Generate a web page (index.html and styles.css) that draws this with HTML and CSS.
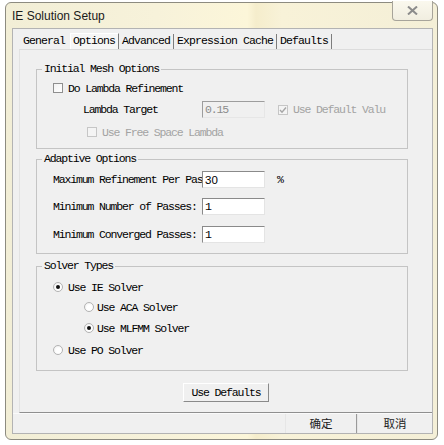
FILE: index.html
```html
<!DOCTYPE html>
<html lang="en">
<head>
    <meta charset="UTF-8">
    <title>IE Solution Setup</title>
    <link rel="stylesheet" href="styles.css">
</head>
<body>
    <div class="window">
        <div class="titlebar">
            <span class="title">IE Solution Setup</span>
            <div class="close-btn">
                <svg width="11" height="9" viewBox="0 0 11 9">
                    <path d="M1 0.5 L10 8.5 M10 0.5 L1 8.5" stroke="#8c8c8c" stroke-width="2" fill="none"/>
                </svg>
            </div>
        </div>

        <div class="client">
            <!-- Reiter -->
            <div class="tabs">
                <span class="tab plain">General</span>
                <span class="tab selected">Options</span>
                <span class="tab">Advanced</span>
                <span class="tab">Expression Cache</span>
                <span class="tab">Defaults</span>
            </div>

            <div class="page">
                <!-- Initial Mesh Options -->
                <fieldset class="group group-mesh">
                    <legend>Initial Mesh Options</legend>
                    <div class="row row-check">
                        <span class="box"></span>
                        <span>Do Lambda Refinement</span>
                    </div>
                    <div class="row row-lambda">
                        <span class="lambda-label">Lambda Target</span>
                        <input class="field disabled" type="text" value="0.15" readonly>
                        <span class="box disabled checked">
                            <svg width="8" height="8" viewBox="0 0 8 8">
                                <path d="M1 4 L3 6.2 L7 1.5" stroke="#a6a6a6" stroke-width="1.4" fill="none"/>
                            </svg>
                        </span>
                        <span class="muted">Use Default Valu</span>
                    </div>
                    <div class="row row-free">
                        <span class="box disabled"></span>
                        <span class="muted">Use Free Space Lambda</span>
                    </div>
                </fieldset>

                <!-- Adaptive Options -->
                <fieldset class="group group-adaptive">
                    <legend>Adaptive Options</legend>
                    <div class="row row-field first">
                        <span class="label">Maximum Refinement Per Pas</span>
                        <input class="field sans" type="text" value="30" readonly>
                        <span class="unit">%</span>
                    </div>
                    <div class="row row-field second">
                        <span class="label">Minimum Number of Passes:</span>
                        <input class="field" type="text" value="1" readonly>
                    </div>
                    <div class="row row-field third">
                        <span class="label">Minimum Converged Passes:</span>
                        <input class="field" type="text" value="1" readonly>
                    </div>
                </fieldset>

                <!-- Solver Types -->
                <fieldset class="group group-solver">
                    <legend>Solver Types</legend>
                    <div class="row radio-row r1">
                        <span class="radio on"></span>
                        <span>Use IE Solver</span>
                    </div>
                    <div class="row radio-row r2 sub">
                        <span class="radio"></span>
                        <span>Use ACA Solver</span>
                    </div>
                    <div class="row radio-row r3 sub">
                        <span class="radio on"></span>
                        <span>Use MLFMM Solver</span>
                    </div>
                    <div class="row radio-row r4">
                        <span class="radio"></span>
                        <span>Use PO Solver</span>
                    </div>
                </fieldset>

                <div class="center">
                    <button type="button" class="btn">Use Defaults</button>
                </div>
            </div>

            <!-- Dialog-Buttons -->
            <div class="footer">
                <button type="button" class="foot-btn ok">确定</button>
                <button type="button" class="foot-btn cancel">取消</button>
            </div>
        </div>
    </div>
</body>
</html>
```

FILE: styles.css
```css
body {
    margin: 0;
    background-color: #fff;
    font-family: "Liberation Mono", "Courier New", monospace;
    font-size: 11.5px;
    letter-spacing: -1.15px;
    color: #000;
}
.window {
    margin: 2px 0 0 5px;
    width: 433px;
    height: 438px;
    box-sizing: border-box;
    border: 1px solid #8d8b80;
    border-radius: 6px;
    padding: 0 4px 5px 6px;
    background: linear-gradient(90deg, #f2eed6 0%, #f7f2da 35%, #fcf6d9 56%, #f5edcc 58%, #f8f2d8 64%, #f4efd7 100%);
}
.titlebar {
    display: flex;
    height: 25px;
    align-items: center;
}
.title {
    font-family: "Liberation Sans", Arial, sans-serif;
    font-size: 12px;
    letter-spacing: 0;
    color: #1a1a1a;
}
.close-btn {
    margin-left: auto;
    align-self: flex-start;
    margin-top: -2px;
    width: 41px;
    height: 20px;
    box-sizing: border-box;
    border: 1px solid #a7a49a;
    border-top: none;
    border-radius: 0 0 4px 4px;
    background: linear-gradient(#faf8ee, #f1eee0);
    display: flex;
    align-items: center;
    justify-content: center;
}
.client {
    height: 406px;
    box-sizing: border-box;
    border: 1px solid #b3b3b3;
    background-color: #f0f0f0;
    display: flex;
    flex-direction: column;
}
.tabs {
    height: 21px;
    display: flex;
    align-items: flex-end;
    padding-left: 7px;
    letter-spacing: -0.9px;
}
.tab {
    height: 15px;
    line-height: 14px;
    padding: 0 3px;
    border-right: 1px solid #7d7d7d;
}
.tab.plain {
    border-right: none;
    margin-right: 2px;
}
.tab.selected {
    height: 16px;
    background-color: #f6f6f6;
    border-left: 1px solid #fff;
    border-top: 1px solid #fff;
    padding-left: 2px;
    box-sizing: border-box;
}
.page {
    margin-left: 6px;
    border-top: 1px solid #dcdcdc;
    border-left: 1px solid #e2e2e2;
    border-bottom: 1px solid #8f8f8f;
    padding: 13px 0 10px 16px;
}
.group {
    margin: 0;
    padding: 0;
    width: 372px;
    box-sizing: border-box;
    border: 1px solid #c4c4c4;
    min-width: 0;
}
.group legend {
    margin-left: 5px;
    padding: 0 2px;
    line-height: 12px;
}
.group-mesh {
    padding-bottom: 9px;
}
.group-adaptive {
    margin-top: 4px;
    padding-bottom: 10px;
}
.group-solver {
    margin-top: 6px;
    padding-bottom: 13px;
}
.row {
    display: flex;
    align-items: center;
    white-space: nowrap;
}
.row-check {
    height: 14px;
    margin-top: 6px;
    padding-left: 16px;
}
.row-lambda {
    height: 17px;
    margin-top: 6px;
    padding-left: 46px;
}
.row-free {
    height: 14px;
    margin-top: 7px;
    padding-left: 50px;
}
.lambda-label {
    width: 119px;
}
.row-field {
    height: 17px;
    padding-left: 16px;
}
.row-field.first { margin-top: 6px; }
.row-field.second { margin-top: 10px; }
.row-field.third { margin-top: 11px; }
.label {
    width: 149px;
    overflow: hidden;
}
.unit {
    margin-left: 12px;
}
.box {
    width: 10px;
    height: 10px;
    box-sizing: border-box;
    border: 1px solid #8f8f8f;
    background: linear-gradient(135deg, #f2f2f2, #fff);
    margin-right: 5px;
    display: flex;
    align-items: center;
    justify-content: center;
}
.box.disabled {
    border-color: #c6c6c6;
    background: #f4f4f4;
}
.box.checked {
    margin-left: 13px;
}
.muted {
    color: #a3a3a3;
}
.field {
    width: 63px;
    height: 17px;
    box-sizing: border-box;
    margin: 0;
    padding: 0 2px;
    border: 1px solid;
    border-color: #8a8a8a #e4e4e4 #e4e4e4 #8a8a8a;
    background-color: #fff;
    font-family: "Liberation Mono", "Courier New", monospace;
    font-size: 11.5px;
    letter-spacing: -1.15px;
    color: #000;
    outline: none;
}
.field.disabled {
    background-color: #f0f0f0;
    color: #8c8c8c;
    border-color: #9d9d9d #e6e6e6 #e6e6e6 #9d9d9d;
}
.field.sans {
    font-family: "Liberation Sans", Arial, sans-serif;
    letter-spacing: 0;
}
.radio-row {
    height: 14px;
    padding-left: 16px;
}
.radio-row.sub {
    padding-left: 47px;
}
.r1 { margin-top: 8px; }
.r2 { margin-top: 6px; }
.r3 { margin-top: 7px; }
.r4 { margin-top: 8px; }
.radio {
    width: 10px;
    height: 10px;
    box-sizing: border-box;
    border: 1px solid #b3b3b3;
    border-radius: 50%;
    background: radial-gradient(circle at 60% 60%, #fff 40%, #e8e8e8);
    margin-right: 5px;
    display: flex;
    align-items: center;
    justify-content: center;
}
.radio.on::after {
    content: "";
    width: 4px;
    height: 4px;
    border-radius: 50%;
    background-color: #111;
}
.radio-row.sub .radio {
    margin-right: 3px;
}
.center {
    display: flex;
    justify-content: center;
    margin-top: 12px;
    padding-right: 16px;
}
.btn {
    width: 86px;
    height: 19px;
    padding: 0;
    border: 1px solid;
    border-color: #fff #8a8a8a #8a8a8a #fff;
    background-color: #f0f0f0;
    font-family: "Liberation Mono", "Courier New", monospace;
    font-size: 11.5px;
    letter-spacing: -1.15px;
    color: #000;
}
.footer {
    flex: 1;
    display: flex;
    justify-content: flex-end;
    border-top: 1px solid #fafafa;
}
.foot-btn {
    height: 19px;
    padding: 0;
    margin: 0;
    border: none;
    border-left: 1px solid #e6e6e6;
    background-color: #f0f0f0;
    font-family: "Noto Sans CJK SC", sans-serif;
    font-size: 11.5px;
    line-height: 19px;
    color: #222;
}
.foot-btn.ok {
    width: 72px;
    border-right: 1px solid #9a9a9a;
}
.foot-btn.cancel {
    width: 75px;
}
```
